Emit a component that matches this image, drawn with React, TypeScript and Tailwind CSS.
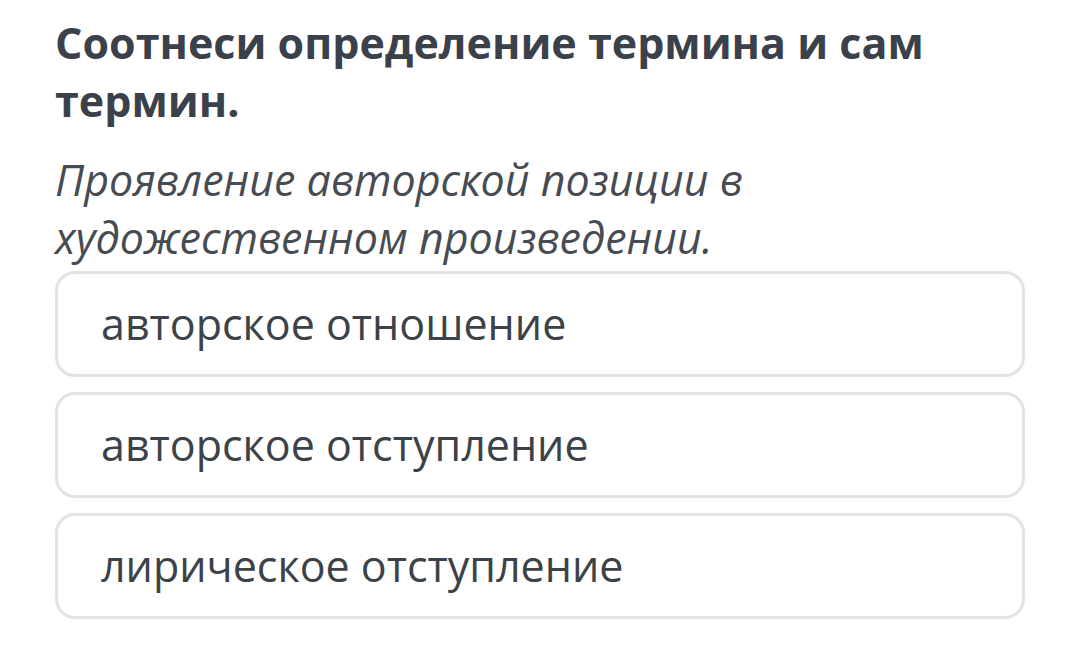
export default function App() {
  const options = ["авторское отношение", "авторское отступление", "лирическое отступление"];
  return (
    <div className="w-[1080px] h-[661px] bg-white overflow-hidden" style={{ fontFamily: '"Open Sans", sans-serif' }}>
      <div className="pl-[55px] pr-[55px] pt-[14px]">
        <h1 className="text-[43px] leading-[58px] font-bold text-[#3b414a]">
          Соотнеси определение термина и сам термин.
        </h1>
        <p className="mt-[21px] text-[43px] leading-[58px] italic text-[#474c52] pr-[200px]">
          Проявление авторской позиции в художественном произведении.
        </p>
        <div className="flex flex-col gap-[15px] mt-[4px]">
          {options.map((o) => (
            <div
              key={o}
              className="h-[106px] border-[3px] border-[#e1e4e4] rounded-[20px] flex items-center pl-[43px] text-[43px] text-[#3c4248]"
            >
              {o}
            </div>
          ))}
        </div>
      </div>
    </div>
  );
}
